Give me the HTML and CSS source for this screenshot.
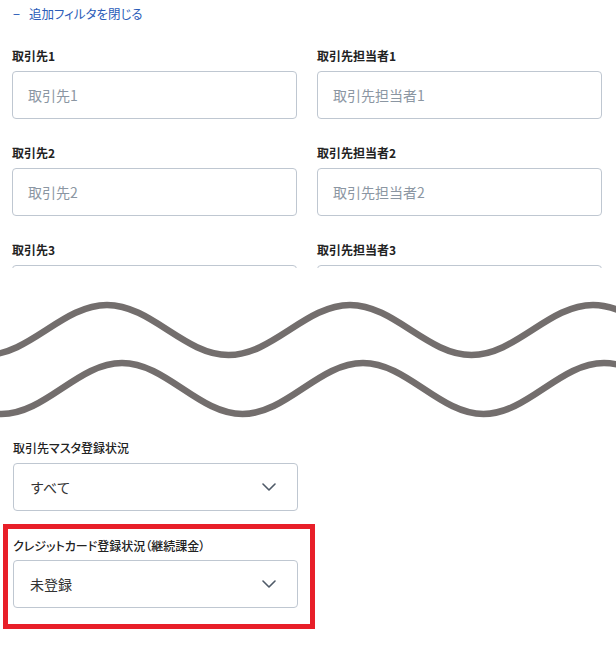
FILE: index.html
```html
<!DOCTYPE html>
<html lang="ja">
<head>
<meta charset="utf-8">
<title>フィルタ</title>
<link rel="stylesheet" href="styles.css">
</head>
<body>
<div class="top">
  <a class="toggle" href="#"><span class="minus">−</span>追加フィルタを閉じる</a>
  <div class="grid">
    <div class="field">
      <label class="label">取引先1</label>
      <input class="input" type="text" placeholder="取引先1">
    </div>
    <div class="field">
      <label class="label">取引先担当者1</label>
      <input class="input" type="text" placeholder="取引先担当者1">
    </div>
    <div class="field">
      <label class="label">取引先2</label>
      <input class="input" type="text" placeholder="取引先2">
    </div>
    <div class="field">
      <label class="label">取引先担当者2</label>
      <input class="input" type="text" placeholder="取引先担当者2">
    </div>
    <div class="field">
      <label class="label">取引先3</label>
      <input class="input" type="text" placeholder="取引先3">
    </div>
    <div class="field">
      <label class="label">取引先担当者3</label>
      <input class="input" type="text" placeholder="取引先担当者3">
    </div>
  </div>
</div>
<svg class="waves" width="616" height="171" viewBox="0 268 616 171" xmlns="http://www.w3.org/2000/svg">
  <path class="wave" d="M -14.5 355 C 29.75 355, 62.75 305, 107 305 C 151.25 305, 184.25 355, 228.5 355 C 272.75 355, 305.75 305, 350 305 C 394.25 305, 427.25 355, 471.5 355 C 515.75 355, 548.75 305, 593 305 C 637.25 305, 670.25 355, 714.5 355"/>
  <path class="wave" d="M -119 363 C -75.1 363, -42.4 414, 1.5 414 C 45.4 414, 78.1 363, 122 363 C 165.9 363, 198.6 414, 242.5 414 C 286.4 414, 319.1 363, 363 363 C 406.9 363, 439.6 414, 483.5 414 C 527.4 414, 560.1 363, 604 363 C 647.9 363, 680.6 414, 724.5 414"/>
</svg>
<div class="bottom">
  <div class="field plain">
    <label class="label sub">取引先マスタ登録状況</label>
    <div class="select">
      <span class="value">すべて</span>
      <svg class="chev" width="14" height="8" viewBox="0 0 14 8"><polyline points="1,1 7,7 13,1"/></svg>
    </div>
  </div>
  <div class="field highlight">
    <label class="label sub">クレジットカード登録状況（継続課金）</label>
    <div class="select">
      <span class="value">未登録</span>
      <svg class="chev" width="14" height="8" viewBox="0 0 14 8"><polyline points="1,1 7,7 13,1"/></svg>
    </div>
  </div>
</div>
</body>
</html>
```

FILE: styles.css
```css
* { box-sizing: border-box; }
html, body {
  margin: 0;
  padding: 0;
  background: #ffffff;
}
body {
  width: 616px;
  height: 656px;
  overflow: hidden;
  font-family: "Noto Sans CJK JP", "Noto Sans", sans-serif;
  color: #222;
}
.top {
  height: 268px;
  overflow: hidden;
  padding: 4px 0 0 12px;
}
.toggle {
  display: block;
  margin-left: 1px;
  font-size: 12.5px;
  line-height: 20px;
  height: 20px;
  color: #2b5cb8;
  text-decoration: none;
  font-feature-settings: "palt";
}
.minus {
  display: inline-block;
  width: 16px;
}
.grid {
  margin-top: 23px;
  display: grid;
  grid-template-columns: 285px 285px;
  column-gap: 20px;
  row-gap: 25px;
}
.field {
  display: flex;
  flex-direction: column;
}
.label {
  font-size: 12px;
  line-height: 18px;
  font-weight: 700;
  color: #222;
  margin-bottom: 6px;
  font-feature-settings: "palt";
}
.label.sub {
  font-weight: 500;
  color: #222;
}
.input {
  height: 48px;
  width: 285px;
  border: 1px solid #bfc7d1;
  border-radius: 4px;
  padding: 0 15px;
  font-family: inherit;
  font-size: 14px;
  color: #333;
  background: #fff;
  outline: none;
}
.input::placeholder {
  color: #8b96a2;
}
.waves {
  display: block;
}
.wave {
  fill: none;
  stroke: #736e6d;
  stroke-width: 6.5;
  stroke-linecap: round;
}
.bottom {
  padding-left: 3px;
}
.plain {
  padding-left: 10px;
}
.highlight {
  margin-top: 13px;
  width: 312px;
  border: 5px solid #e81f29;
  padding: 8px 12px 16px 5px;
}
.highlight .label {
  margin-bottom: 5px;
}
.select {
  width: 285px;
  height: 48px;
  border: 1px solid #bfc7d1;
  border-radius: 4px;
  display: flex;
  align-items: center;
  justify-content: space-between;
  padding: 0 21px 0 16px;
  font-size: 14px;
  color: #333;
}
.chev polyline {
  fill: none;
  stroke: #4f5a68;
  stroke-width: 1.6;
  stroke-linecap: round;
  stroke-linejoin: round;
}
```
